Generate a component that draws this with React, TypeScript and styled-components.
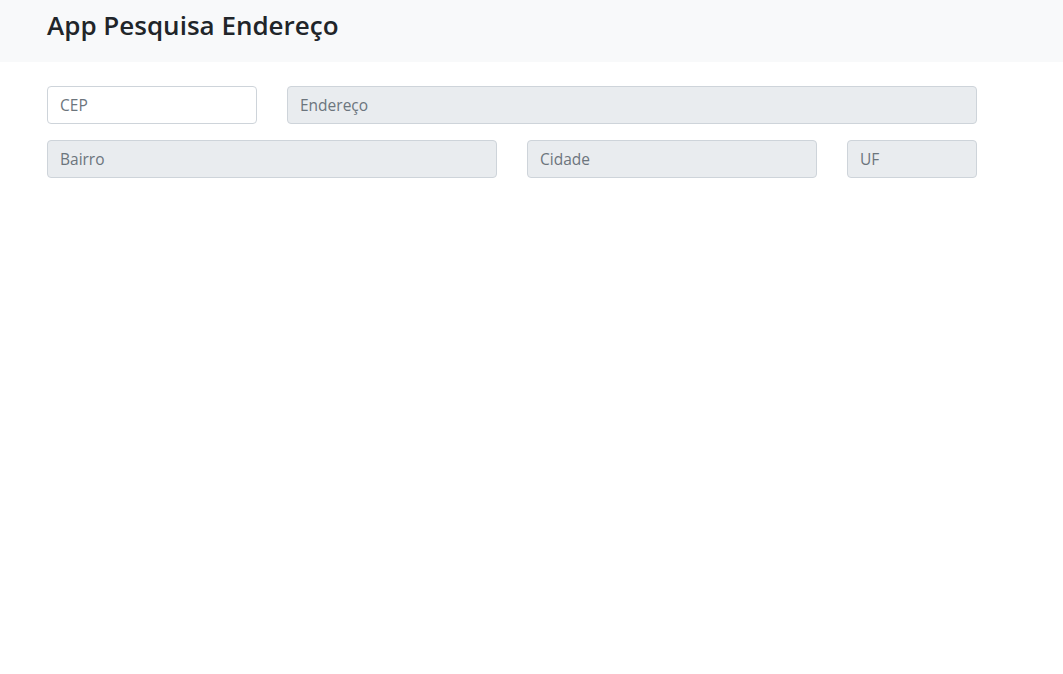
import React from "react";
import styled, { createGlobalStyle } from "styled-components";

const GlobalStyle = createGlobalStyle`
  html, body { margin: 0; padding: 0; background: #fff; }
  body {
    font-family: "Open Sans", "Noto Sans", "Liberation Sans", sans-serif;
    color: #212529;
  }
  * { box-sizing: border-box; }
`;

const Navbar = styled.header`
  background: #f8f9fa;
  height: 62px;
  display: flex;
  align-items: flex-start;
`;

const Container = styled.div`
  width: 930px;
  margin-left: 47px;
`;

const Title = styled.h1`
  margin: 0;
  padding-top: 5px;
  font-size: 26px;
  font-weight: 600;
  line-height: 40px;
  color: #212529;
`;

const Form = styled.form`
  margin-top: 24px;
  display: flex;
  flex-direction: column;
  gap: 16px;
`;

const Row = styled.div<{ $cols: string }>`
  display: grid;
  grid-template-columns: ${(p) => p.$cols};
  column-gap: 30px;
`;

const Input = styled.input`
  display: block;
  width: 100%;
  height: 38px;
  padding: 6px 12px;
  font-family: inherit;
  font-size: 15.5px;
  line-height: 1.5;
  color: #495057;
  background: #fff;
  border: 1px solid #ced4da;
  border-radius: 4px;
  outline: none;
  &::placeholder { color: #6c757d; opacity: 1; }
  &:disabled { background: #e9ecef; }
`;

export default function App() {
  return (
    <>
      <GlobalStyle />
      <Navbar>
        <Container>
          <Title>App Pesquisa Endereço</Title>
        </Container>
      </Navbar>
      <Container>
        <Form onSubmit={(e) => e.preventDefault()}>
          <Row $cols="210px 690px">
            <Input placeholder="CEP" />
            <Input placeholder="Endereço" disabled />
          </Row>
          <Row $cols="450px 290px 130px">
            <Input placeholder="Bairro" disabled />
            <Input placeholder="Cidade" disabled />
            <Input placeholder="UF" disabled />
          </Row>
        </Form>
      </Container>
    </>
  );
}
